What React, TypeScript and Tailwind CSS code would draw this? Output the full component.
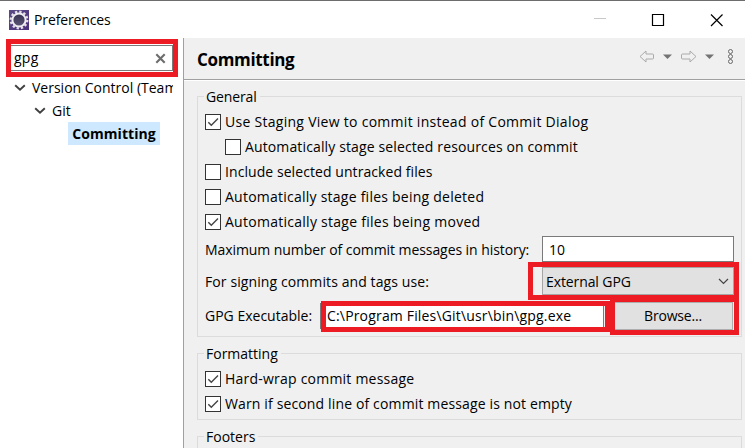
import React from "react";

const FONT = "font-['Open_Sans','Noto_Sans',sans-serif]";

function Label({ children, className = "" }: { children: React.ReactNode; className?: string }) {
  return <span className={`block whitespace-nowrap leading-5 ${className}`}>{children}</span>;
}

function Check({ on = false, label, track, indent = false }: { on?: boolean; label: string; track: string; indent?: boolean }) {
  return (
    <div className={`flex h-[25px] items-center ${indent ? "pl-5" : ""}`}>
      <span className="mr-1 h-4 w-4 shrink-0 border border-[#333] bg-white">
        {on && (
          <svg viewBox="0 0 14 14" className="block h-[14px] w-[14px]" fill="none" stroke="#444" strokeWidth="1.4">
            <path d="M2.3 7.2 5.3 10.3 12 3.5" />
          </svg>
        )}
      </span>
      <Label className={track}>{label}</Label>
    </div>
  );
}

function Group({ title, titleClass, className, children }: { title: string; titleClass: string; className: string; children?: React.ReactNode }) {
  return (
    <section className={`relative ml-3 w-[545px] border border-[#dcdcdc] pl-[7px] ${className}`}>
      <Label className={`absolute left-[6px] bg-[#f0f0f0] pr-[3px] pl-[2px] ${titleClass}`}>{title}</Label>
      {children}
    </section>
  );
}

function Mark({ className }: { className: string }) {
  return <div className={`pointer-events-none absolute border-5 border-[#ed1c24] ${className}`} />;
}

function Chevron() {
  return (
    <svg width="12" height="8" viewBox="0 0 12 8" className="shrink-0" fill="none" stroke="#404040" strokeWidth="1.9">
      <path d="M1.2 1.2 6 5.8 10.8 1.2" />
    </svg>
  );
}

function Gear() {
  return (
    <svg width="20" height="20" viewBox="0 0 20 20">
      <defs>
        <linearGradient id="tile" x1="0" y1="0" x2="1" y2="1">
          <stop offset="0" stopColor="#5b4b86" />
          <stop offset="1" stopColor="#4b2f7c" />
        </linearGradient>
        <linearGradient id="core" x1="0" y1="0" x2="0" y2="1">
          <stop offset="0" stopColor="#35304f" />
          <stop offset="1" stopColor="#5c5676" />
        </linearGradient>
      </defs>
      <rect width="20" height="20" fill="url(#tile)" />
      <circle cx="10" cy="10" r="8.3" fill="none" stroke="#e2dfe7" strokeWidth="2.2" strokeDasharray="2.35 1.995" />
      <circle cx="10" cy="10" r="6.6" fill="url(#core)" stroke="#efedf2" strokeWidth="2" />
    </svg>
  );
}

export default function App() {
  return (
    <div className={`relative flex h-[448px] w-[745px] flex-col overflow-hidden bg-white text-[14px] text-black ${FONT}`}>
      <header className="flex h-[38px] items-center border-t border-[#6d6d6d] pl-[9px]">
        <Gear />
        <Label className="ml-[5px] tracking-[-0.12px]">Preferences</Label>
        <svg width="130" height="14" viewBox="0 0 130 14" className="mr-[21px] ml-auto" fill="none">
          <path d="M0 5.5h12" stroke="#c8c8c8" />
          <path d="M58.5 1.5h11v11h-11z" stroke="#000" strokeWidth="1.2" />
          <path d="m117 1.5 11.5 11.5m0-11.5-11.5 11.5" stroke="#000" strokeWidth="1.2" />
        </svg>
      </header>
      <div className="flex min-h-0 flex-1">
        <aside className="w-[184px] shrink-0 overflow-hidden border-r border-[#a0a0a0] pt-[7px]">
          <div className="ml-[11px] flex h-[26px] w-[162px] items-center border border-l-0 border-[#7a7a7a] pr-[6px] pl-[3px]">
            <Label className="tracking-[0.25px]">gpg</Label>
            <svg width="11" height="11" viewBox="0 0 11 11" className="ml-auto" stroke="#6d6d6d" strokeWidth="2.1">
              <path d="m1.3 1.3 8.4 8.4m0-8.4-8.4 8.4" />
            </svg>
          </div>
          <div className="mt-[5px] flex h-[23px] w-[173px] items-center overflow-hidden pl-[14px]">
            <Chevron />
            <Label className="ml-[6px]">Version Control (Team</Label>
          </div>
          <div className="flex h-[23px] items-center pl-[34px]">
            <Chevron />
            <Label className="ml-[6px]">Git</Label>
          </div>
          <div className="ml-[68px] flex h-[23px] w-[92px] items-center justify-center bg-[#cde8ff]">
            <Label className="font-bold tracking-[0.05px]">Committing</Label>
          </div>
        </aside>
        <main className="min-w-0 flex-1 bg-[#f0f0f0] pl-px">
          <div className="-ml-px flex h-[42px] items-center border-b border-[#a0a0a0] pl-[13px]">
            <Label className="pt-[2px] text-[17px] font-bold tracking-[-0.33px]">Committing</Label>
            <svg width="96" height="16" viewBox="0 0 96 16" className="mr-[10px] mb-[5px] ml-auto" fill="none">
              <path d="M1 8.5 7 3v3h6.5q1 0 1 1v3q0 1-1 1H7v3z" stroke="#aaa" strokeLinejoin="round" />
              <path d="M24 6.5h9L28.5 11z" fill="#737373" />
              <path d="M57 8.5 51 3v3h-7.5q-1 0-1 1v3q0 1 1 1H51v3z" stroke="#aaa" strokeLinejoin="round" />
              <path d="M66 6.5h9L70.5 11z" fill="#737373" />
              <g stroke="#686868">
                <circle cx="91.5" cy="3.5" r="2" />
                <circle cx="91.5" cy="8.5" r="2" />
                <circle cx="91.5" cy="13.5" r="2" />
              </g>
            </svg>
          </div>
          <div className="-ml-px h-px bg-white" />
          <Group title="General" titleClass="-top-[10px] tracking-[-0.12px]" className="mt-[15px] h-[241px] pt-3">
            <Check on label="Use Staging View to commit instead of Commit Dialog" track="tracking-[0.28px]" />
            <Check indent label="Automatically stage selected resources on commit" track="tracking-[0.13px]" />
            <Check label="Include selected untracked files" track="tracking-[0.07px]" />
            <Check label="Automatically stage files being deleted" track="tracking-[0.24px]" />
            <Check on label="Automatically stage files being moved" track="tracking-[0.27px]" />
            <div className="mt-[2px] flex h-[26px] items-center">
              <Label className="pt-px tracking-[-0.07px]">Maximum number of commit messages in history:</Label>
              <div className="mr-[7px] ml-auto flex h-[26px] w-[192px] items-center border border-[#7a7a7a] bg-white pl-[6px]">
                <Label className="pt-px">10</Label>
              </div>
            </div>
            <div className="mt-[5px] flex h-[28px] items-center">
              <Label className="pt-px tracking-[0.1px]">For signing commits and tags use:</Label>
              <div className="mr-[7px] ml-auto flex h-[28px] w-[192px] items-center border border-[#a5a5a5] bg-[#e1e1e1] pr-[4px] pl-[3px]">
                <Label className="pt-px tracking-[-0.1px]">External GPG</Label>
                <svg width="11" height="7" viewBox="0 0 11 7" className="ml-auto" fill="none" stroke="#444" strokeWidth="1.2">
                  <path d="M1 1 5.5 5.5 10 1" />
                </svg>
              </div>
            </div>
            <div className="mt-[7px] flex h-[28px] items-center">
              <Label className="w-[115px]">GPG Executable:</Label>
              <div className="flex h-[26px] w-[284px] items-center border border-[#7a7a7a] bg-white pl-[6px]">
                <Label className="tracking-[0.17px]">C:\Program Files\Git\usr\bin\gpg.exe</Label>
              </div>
              <div className="mr-[8px] ml-auto flex h-[28px] w-[120px] items-center justify-center border border-[#adadad] bg-[#e1e1e1]">
                <Label className="tracking-[-0.2px]">Browse...</Label>
              </div>
            </div>
          </Group>
          <Group title="Formatting" titleClass="-top-[10px]" className="mt-[16px] h-[67px] pt-3">
            <Check on label="Hard-wrap commit message" track="tracking-[0.22px]" />
            <Check on label="Warn if second line of commit message is not empty" track="tracking-[0.14px]" />
          </Group>
          <Group title="Footers" titleClass="-top-[10px]" className="mt-[16px] h-[67px]" />
        </main>
      </div>
      <Mark className="top-[39px] left-[6px] h-[38px] w-[172px]" />
      <Mark className="top-[262px] left-[528px] h-[38px] w-[211px]" />
      <Mark className="top-[301px] left-[321px] h-[31px] w-[289px]" />
      <Mark className="top-[297px] left-[610px] h-[38px] w-[129px]" />
    </div>
  );
}
